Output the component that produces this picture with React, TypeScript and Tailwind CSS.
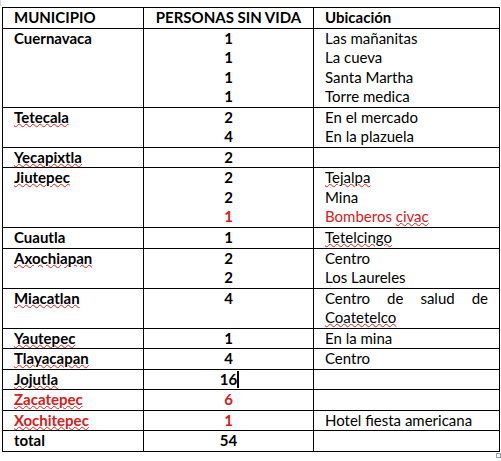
import type { ReactNode } from 'react'

const RED = 'text-[#d4201c]'
const sq = 'underline decoration-wavy decoration-[#e0201c] decoration-1 underline-offset-0'

type Row = {
  name: ReactNode
  nums: ReactNode[]
  places: ReactNode[]
}

const rows: Row[] = [
  {
    name: 'Cuernavaca',
    nums: ['1', '1', '1', '1'],
    places: ['Las mañanitas', 'La cueva', 'Santa Martha', 'Torre medica'],
  },
  {
    name: <span className={sq}>Tetecala</span>,
    nums: ['2', '4'],
    places: ['En el mercado', 'En la plazuela'],
  },
  { name: <span className={sq}>Yecapixtla</span>, nums: ['2'], places: [] },
  {
    name: <span className={sq}>Jiutepec</span>,
    nums: ['2', '2', <span className={RED}>1</span>],
    places: [
      <span className={sq}>Tejalpa</span>,
      'Mina',
      <span className={RED}>
        Bomberos <span className={sq}>civac</span>
      </span>,
    ],
  },
  { name: 'Cuautla', nums: ['1'], places: [<span className={sq}>Tetelcingo</span>] },
  {
    name: <span className={sq}>Axochiapan</span>,
    nums: ['2', '2'],
    places: ['Centro', 'Los Laureles'],
  },
  {
    name: <span className={sq}>Miacatlan</span>,
    nums: ['4'],
    places: [
      <div className="text-justify [text-align-last:left]">
        Centro de salud de <span className={sq}>Coatetelco</span>
      </div>,
    ],
  },
  { name: <span className={sq}>Yautepec</span>, nums: ['1'], places: ['En la mina'] },
  { name: <span className={sq}>Tlayacapan</span>, nums: ['4'], places: ['Centro'] },
  {
    name: <span className={sq}>Jojutla</span>,
    nums: [
      <span className="relative">
        16
        <span className="absolute -right-[2px] top-[1px] h-[17px] w-[2px] bg-black" />
      </span>,
    ],
    places: [],
  },
  {
    name: <span className={`${sq} ${RED}`}>Zacatepec</span>,
    nums: [<span className={RED}>6</span>],
    places: [],
  },
  {
    name: <span className={`${sq} ${RED}`}>Xochitepec</span>,
    nums: [<span className={RED}>1</span>],
    places: ['Hotel fiesta americana'],
  },
  { name: 'total', nums: ['54'], places: [] },
]

export default function App() {
  return (
    <div className="relative h-[461px] w-[501px] overflow-hidden bg-white pl-[2px] pt-[7px] font-['Lato','Liberation_Sans',sans-serif] text-[15px] leading-[19.55px] text-black">
      <div className="absolute left-0 top-0 h-[6px] w-[1px] bg-gray-300" />
      <table className="w-[497px] table-fixed border-collapse">
        <colgroup>
          <col className="w-[141px]" />
          <col className="w-[170px]" />
          <col className="w-[186px]" />
        </colgroup>
        <thead>
          <tr className="font-bold">
            <th className="border border-black px-[11px] text-left font-bold">MUNICIPIO</th>
            <th className="border border-black px-[11px] text-center font-bold">PERSONAS SIN VIDA</th>
            <th className="border border-black px-[11px] text-left font-bold">Ubicación</th>
          </tr>
        </thead>
        <tbody>
          {rows.map((r, i) => (
            <tr key={i}>
              <td className="border border-black px-[11px] align-top font-bold">{r.name}</td>
              <td className="border border-black px-[11px] text-center align-top font-bold">
                {r.nums.map((n, j) => (
                  <div key={j}>{n}</div>
                ))}
              </td>
              <td className="border border-black px-[11px] align-top">
                {r.places.length === 0 ? <div>&nbsp;</div> : r.places.map((p, j) => <div key={j}>{p}</div>)}
              </td>
            </tr>
          ))}
        </tbody>
      </table>
      <div className="absolute left-[496px] top-[453px] h-[5px] w-[5px] border border-gray-400" />
    </div>
  )
}
